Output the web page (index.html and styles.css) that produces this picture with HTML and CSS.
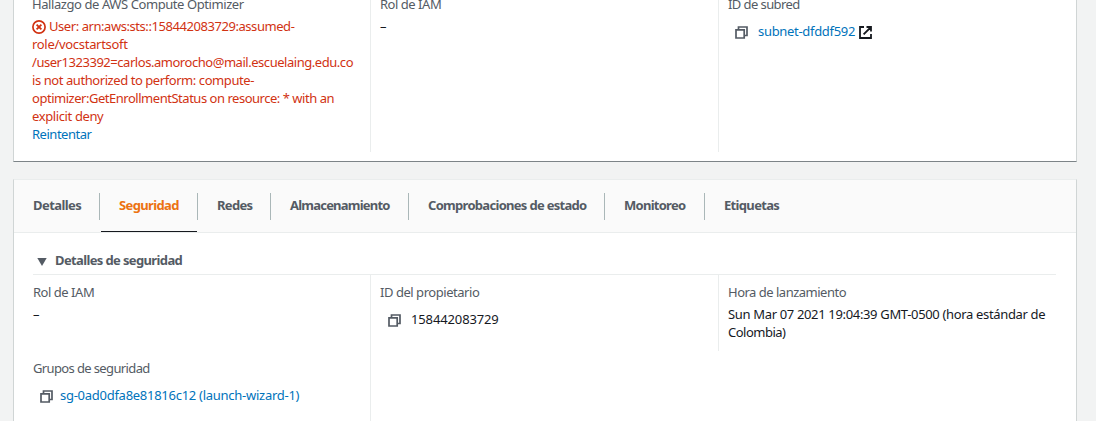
FILE: index.html
```html
<!DOCTYPE html>
<html lang="es">
<head>
<meta charset="utf-8">
<title>Detalles de la instancia</title>
<link rel="stylesheet" href="styles.css">
</head>
<body>
<svg class="defs" width="0" height="0">
  <symbol id="copy" viewBox="0 0 13 13">
    <path d="M3.5 3V1H12V9.5H10" fill="none" stroke="#545b64" stroke-width="1.7"/>
    <path d="M1 3.8H9.2V12H1Z" fill="none" stroke="#545b64" stroke-width="1.7"/>
  </symbol>
</svg>
<main class="page">
  <section class="panel summary">
    <div class="columns">
      <div class="col">
        <div class="label"><span class="t-hallazgo">Hallazgo de AWS Compute Optimizer</span></div>
        <div class="value error">
          <div class="line"><svg class="err-icon" viewBox="0 0 14 14"><circle cx="7" cy="7" r="6.1" fill="none" stroke="#d13212" stroke-width="1.7"/><path d="M4.6 4.6L9.4 9.4M9.4 4.6L4.6 9.4" stroke="#d13212" stroke-width="1.8"/></svg><span class="e1">User: arn:aws:sts::158442083729:assumed-</span></div>
          <div class="line"><span class="e2">role/vocstartsoft</span></div>
          <div class="line"><span class="e3">/user1323392=carlos.amorocho@mail.escuelaing.edu.co</span></div>
          <div class="line"><span class="e4">is not authorized to perform: compute-</span></div>
          <div class="line"><span class="e5">optimizer:GetEnrollmentStatus on resource: * with an</span></div>
          <div class="line"><span class="e6">explicit deny</span></div>
        </div>
        <div class="link"><span class="t-retry">Reintentar</span></div>
      </div>
      <div class="col">
        <div class="label"><span class="t-rol">Rol de IAM</span></div>
        <div class="value dash">–</div>
      </div>
      <div class="col">
        <div class="label"><span class="t-subred">ID de subred</span></div>
        <div class="copy-row"><svg class="copy"><use href="#copy"/></svg><span class="link t-subnet">subnet-dfddf592</span><svg class="ext" viewBox="0 0 13 13"><path d="M5 1H1V12H12V8M7.5 1H12V5.5M12 1L4.6 8.4" fill="none" stroke="#16191f" stroke-width="1.8"/></svg></div>
      </div>
    </div>
  </section>

  <section class="panel details">
    <nav class="tabs">
      <a class="tab tab-1"><span>Detalles</span></a>
      <a class="tab tab-2 active"><span>Seguridad</span></a>
      <a class="tab tab-3"><span>Redes</span></a>
      <a class="tab tab-4"><span>Almacenamiento</span></a>
      <a class="tab tab-5"><span>Comprobaciones de estado</span></a>
      <a class="tab tab-6"><span>Monitoreo</span></a>
      <a class="tab tab-7"><span>Etiquetas</span></a>
    </nav>
    <h2 class="heading"><svg class="caret" viewBox="0 0 10 8"><path d="M0.3 0H9.7L5 8Z" fill="#545b64"/></svg><span>Detalles de seguridad</span></h2>
    <div class="columns security">
      <div class="col">
        <div class="label"><span class="t-rol">Rol de IAM</span></div>
        <div class="value dash">–</div>
        <div class="label groups"><span class="t-grupos">Grupos de seguridad</span></div>
        <div class="copy-row tight"><svg class="copy"><use href="#copy"/></svg><span class="link t-sg">sg-0ad0dfa8e81816c12 (launch-wizard-1)</span></div>
      </div>
      <div class="col">
        <div class="label"><span class="t-owner">ID del propietario</span></div>
        <div class="copy-row owner"><svg class="copy"><use href="#copy"/></svg><span class="t-id">158442083729</span></div>
      </div>
      <div class="col short">
        <div class="label"><span class="t-hora">Hora de lanzamiento</span></div>
        <div class="value"><div class="line"><span class="t-date">Sun Mar 07 2021 19:04:39 GMT-0500 (hora estándar de</span></div><div class="line"><span class="t-col">Colombia)</span></div></div>
      </div>
    </div>
  </section>
</main>
</body>
</html>
```
FILE: styles.css
```css
* { box-sizing: border-box; }
body {
  margin: 0;
  background: #f2f3f3;
  color: #16191f;
  font: 13px/18px "Noto Sans", "Open Sans", sans-serif;
  letter-spacing: -0.35px;
  white-space: nowrap;
}
.defs { display: block; }
.page {
  height: 421px;
  overflow: hidden;
  padding: 0 19px 0 13px;
}
.panel {
  background: #fff;
  border: 1px solid #d0d5d5;
  border-top-color: #eaeded;
}
.summary {
  height: 162px;
  border-top: 0;
  border-bottom-color: #7d8488;
  overflow: hidden;
}
.summary .columns { margin-top: -5px; height: 157px; padding-left: 18px; }
.columns { display: grid; grid-template-columns: 338px 348px 1fr; }
.summary .col + .col, .security .col + .col {
  border-left: 1px solid #eaeded;
  padding-left: 9px;
}
.label { color: #545b64; height: 18px; }
.value { margin-top: 4px; }
.error { color: #d13212; }
.line { height: 18px; display: flex; align-items: center; }
.link { color: #0073bb; }
.err-icon { width: 14px; height: 14px; margin: 1px 3px 0 0; }
.copy-row { display: flex; align-items: center; height: 18px; margin: 10px 0 0 7px; }
.copy-row span { padding-bottom: 2px; }
.copy { width: 13px; height: 13px; margin-right: 10px; }
.ext { width: 13px; height: 13px; margin-left: 4px; }
.copy-row.owner { margin-left: 8px; }
.copy-row.tight { margin-top: 10px; }
.tight .copy { margin-right: 7px; }

/* Tracking per text */
.t-hallazgo { letter-spacing: -0.42px; }
.e1 { letter-spacing: -0.44px; }
.e2 { letter-spacing: -0.3px; }
.e3 { letter-spacing: -0.46px; }
.e4 { letter-spacing: -0.43px; }
.e5 { letter-spacing: -0.475px; }
.e6 { letter-spacing: -0.38px; }
.t-retry { letter-spacing: -0.48px; }
.t-rol { letter-spacing: -0.47px; }
.t-subred { letter-spacing: -0.58px; }
.t-subnet { letter-spacing: -0.31px; }
.t-grupos { letter-spacing: -0.63px; }
.t-sg { letter-spacing: -0.27px; }
.t-owner { letter-spacing: -0.46px; }
.t-id { letter-spacing: -0.13px; }
.t-hora { letter-spacing: -0.5px; }
.t-date { letter-spacing: -0.34px; }
.t-col { letter-spacing: -0.5px; }

.details { margin-top: 17px; height: 260px; }
.tabs {
  display: flex;
  height: 53px;
  padding: 13px 0 0 0;
  background: #fafafa;
  border-bottom: 1px solid #eaeded;
  color: #545b64;
  font-weight: 700;
}
.tab { height: 27px; line-height: 25px; border-right: 1px solid #aab7b8; padding-left: 19px; }
.tab-1 { width: 86px; letter-spacing: -0.57px; }
.tab-2 { width: 98px; letter-spacing: -0.63px; }
.tab-3 { width: 73px; letter-spacing: -0.7px; }
.tab-4 { width: 138px; letter-spacing: -0.78px; }
.tab-5 { width: 196px; letter-spacing: -0.7px; }
.tab-6 { width: 100px; letter-spacing: -0.73px; }
.tab-7 { border-right: 0; letter-spacing: -0.67px; }
.active { color: #ec7211; position: relative; }
.active::after {
  content: "";
  position: absolute;
  left: 1px;
  right: 0;
  top: 38px;
  height: 1px;
  background: #16191f;
}
.heading {
  display: flex;
  align-items: center;
  margin: 0 20px 0 19px;
  height: 42px;
  padding: 13px 0 0 4px;
  border-bottom: 1px solid #eaeded;
  font-size: 13px;
  letter-spacing: -0.63px;
  color: #545b64;
}
.heading span { padding-bottom: 1px; }
.caret { width: 10px; height: 8px; margin: 3px 8px 0 0; }
.security { padding-left: 19px; grid-template-columns: 337px 348px 1fr; height: 146px; }
.security .label:first-child { margin-top: 8px; }
.security .short { height: 76px; }
.groups { margin-top: 36px; }
```
